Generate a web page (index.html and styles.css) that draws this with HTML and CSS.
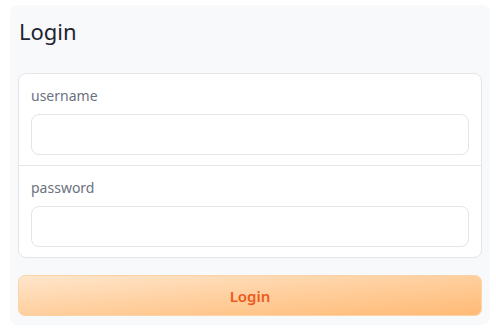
FILE: index.html
```html
<!DOCTYPE html>
<html lang="en">
<head>
<meta charset="utf-8">
<title>Login</title>
<link rel="stylesheet" href="styles.css">
</head>
<body>
<div class="panel">
  <h1 class="title">Login</h1>
  <div class="card">
    <div class="field">
      <label class="label" for="u">username</label>
      <input class="input" id="u" type="text">
    </div>
    <div class="field">
      <label class="label" for="p">password</label>
      <input class="input" id="p" type="password">
    </div>
  </div>
  <button class="btn" type="button">Login</button>
</div>
</body>
</html>
```
FILE: styles.css
```css
* { box-sizing: border-box; }
html, body { margin: 0; background: #ffffff; }
body {
  padding: 5px 6px 8px 10px;
  font-family: "Noto Sans", "Open Sans", sans-serif;
}
.panel {
  width: 480px;
  height: 320px;
  background: #f8f9fb;
  border-radius: 8px;
  padding: 8px 8px 9px 8px;
  display: flex;
  flex-direction: column;
}
.title {
  margin: 0;
  padding: 3px 0 0 1px;
  font-size: 22px;
  line-height: 30px;
  font-weight: 400;
  color: #1f2430;
  height: 61px;
}
.card {
  background: #ffffff;
  border: 1px solid #e4e6ea;
  border-radius: 8px;
  display: flex;
  flex-direction: column;
}
.field {
  display: flex;
  flex-direction: column;
  gap: 8px;
  padding: 12px 12px 10px 12px;
}
.field + .field { border-top: 1px solid #e4e6ea; }
.label {
  font-size: 14px;
  line-height: 20px;
  color: #6b7280;
}
.input {
  height: 41px;
  border: 1px solid #e3e5e9;
  border-radius: 8px;
  background: #ffffff;
  font: inherit;
  outline: none;
  padding: 0 12px;
}
.btn {
  margin-top: 17px;
  height: 41px;
  border: 1px solid #fcd3a6;
  border-radius: 7px;
  background: linear-gradient(to bottom right, #ffe6cc 0%, #ffcf9e 50%, #ffba75 100%);
  color: #ee5a1e;
  font-family: inherit;
  font-size: 15px;
  font-weight: 600;
  cursor: pointer;
}
```
